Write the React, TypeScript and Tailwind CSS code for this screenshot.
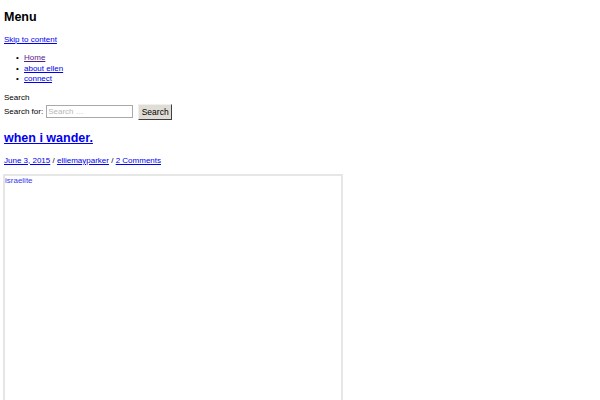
import React from "react";

const linkCls = "text-[#0000ee] underline";

const items = [
  { label: "Home", visited: true },
  { label: "about ellen", visited: false },
  { label: "connect", visited: false },
];

export default function App() {
  return (
    <div className="w-[600px] h-[400px] overflow-hidden bg-white text-black font-['Liberation_Sans',Arial,sans-serif] text-[8px] leading-[10px]">
      <div className="pl-[4px] pt-[9px]">
        <h1 className="text-[12.5px] leading-[16px] font-bold">Menu</h1>
        <a href="#" className={`${linkCls} block mt-[10px]`}>Skip to content</a>
        <ul className="mt-[8px] pl-[12px]">
          {items.map((it) => (
            <li key={it.label} className="flex leading-[10.5px]">
              <span className="w-[8px] text-[8px]">•</span>
              <a href="#" className={it.visited ? "text-[#551a8b] underline" : linkCls}>
                {it.label}
              </a>
            </li>
          ))}
        </ul>
        <p className="mt-[8px]">Search</p>
        <form className="flex items-center mt-[1px]">
          <label>Search for:</label>
          <input
            placeholder="Search …"
            className="ml-[3px] w-[87px] h-[13px] border border-[#a9a9a9] px-[1px] text-[8px] placeholder:text-[#b8b8b8]"
          />
          <button
            type="button"
            className="ml-[5px] h-[16px] w-[34px] bg-[#e0ddd6] border border-t-[#f0f0f0] border-l-[#f0f0f0] border-r-[#404040] border-b-[#404040] text-[8.5px]"
          >
            Search
          </button>
        </form>
        <h2 className="mt-[11px] text-[12.5px] leading-[14px] font-bold">
          <a href="#" className={linkCls}>when i wander.</a>
        </h2>
        <p className="mt-[11px]">
          <a href="#" className={linkCls}>June 3, 2015</a> / <a href="#" className={linkCls}>elliemayparker</a> /{" "}
          <a href="#" className={linkCls}>2 Comments</a>
        </p>
        <div className="mt-[8px] -ml-[1px] w-[340px] h-[300px] border-2 border-[#e6e6e6] px-[0px] pt-[0px] text-[#3a3aee]">
          israelite
        </div>
      </div>
    </div>
  );
}
